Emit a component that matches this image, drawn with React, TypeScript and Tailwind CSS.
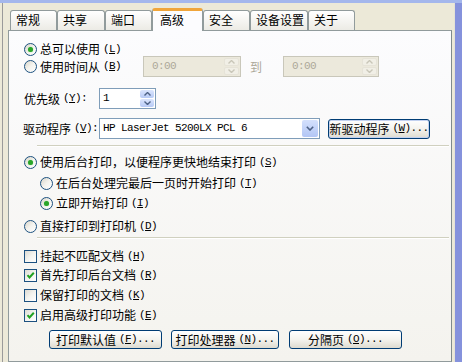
import React from 'react';

const mono = "font-['Liberation_Mono','DejaVu_Sans_Mono',monospace] text-[11px] tracking-[-0.6px]";

function Key({ k, dots }: { k: string; dots?: boolean }) {
  return (
    <span className={`${mono} ml-[3px]`}>
      (<span className="underline underline-offset-[1px]">{k}</span>){dots ? '...' : ''}
    </span>
  );
}

function Radio({ checked }: { checked?: boolean }) {
  return (
    <span className="w-[13px] h-[13px] shrink-0 rounded-full border border-[#1c5180] bg-gradient-to-br from-[#d8d5ca] via-[#f4f3ee] to-white flex items-center justify-center">
      {checked && <span className="w-[5px] h-[5px] rounded-full bg-[#2aa52a] shadow-[0_0_1px_#6fd36f]" />}
    </span>
  );
}

function Check({ checked }: { checked?: boolean }) {
  return (
    <span className="w-[13px] h-[13px] shrink-0 border border-[#1c5180] bg-gradient-to-br from-[#dcdad2] via-[#f3f3ef] to-white flex items-center justify-center">
      {checked && (
        <svg width="11" height="11" viewBox="0 0 11 11">
          <path d="M2.5 5.2 L4.5 7.4 L8.8 2.8" fill="none" stroke="#21a121" strokeWidth="2" />
        </svg>
      )}
    </span>
  );
}

function Arrow({ up, color }: { up?: boolean; color: string }) {
  return (
    <svg width="7" height="4" viewBox="0 0 7 4">
      <path d={up ? 'M0.5 3.5 L3.5 0.5 L6.5 3.5' : 'M0.5 0.5 L3.5 3.5 L6.5 0.5'} fill="none" stroke={color} strokeWidth="1.4" />
    </svg>
  );
}

function TimeBox({ w }: { w: string }) {
  return (
    <div className={`${w} h-[21px] border border-[#c9c7ba] bg-[#ece9dc] flex items-center justify-between`}>
      <span className={`${mono} text-[#aca899] ml-[8px]`}>0:00</span>
      <div className="w-[17px] h-full flex flex-col gap-[1px] p-[1px]">
        <div className="flex-1 rounded-[2px] bg-[#f1efe6] border border-[#e6e3d8] flex items-center justify-center">
          <Arrow up color="#c9c6b8" />
        </div>
        <div className="flex-1 rounded-[2px] bg-[#f1efe6] border border-[#e6e3d8] flex items-center justify-center">
          <Arrow color="#c9c6b8" />
        </div>
      </div>
    </div>
  );
}

function Btn({ w, children }: { w: string; children: React.ReactNode }) {
  return (
    <div className={`${w} h-[19px] rounded-[3px] border border-[#003c74] bg-gradient-to-b from-white via-[#f4f3ee] to-[#dedbd0] flex items-center justify-center text-black`}>
      {children}
    </div>
  );
}

const tabs = [
  { t: '常规', w: 'w-[47px]' },
  { t: '共享', w: 'w-[48px]' },
  { t: '端口', w: 'w-[47px]' },
  { t: '高级', w: 'w-[51px]', sel: true },
  { t: '安全', w: 'w-[47px]' },
  { t: '设备设置', w: 'w-[58px]' },
  { t: '关于', w: 'w-[47px]' },
];

function Sep() {
  return <div className="ml-[13px] w-[412px] h-[2px] border-t border-[#d0d0bf] border-b border-b-white" />;
}

export default function App() {
  return (
    <div className="w-[462px] h-[362px] overflow-hidden bg-[#ece9d8] flex flex-col font-['Noto_Sans_CJK_SC',sans-serif] text-[12px] leading-none text-black">
      <div className="h-[3px] shrink-0 bg-[#a4b7ec]" />
      <div className="flex flex-1 min-h-0">
        <div className="w-[452px] ml-[2px] border-l border-[#9a9a9a] pl-[5px] flex flex-col">
          <div className="h-[22px] mt-[5px] pl-[2px] flex items-end">
            {tabs.map((tab) =>
              tab.sel ? (
                <div
                  key={tab.t}
                  className={`${tab.w} h-[23px] -mb-[1px] relative z-10 rounded-t-[3px] border-x border-[#919b9c] border-t-[3px] border-t-[#f0a53a] bg-[#fcfcfe] pl-[7px] pt-[3px]`}
                >
                  {tab.t}
                </div>
              ) : (
                <div
                  key={tab.t}
                  className={`${tab.w} h-[20px] rounded-t-[3px] border-x border-t border-[#919b9c] bg-gradient-to-b from-white to-[#ecebe5] pl-[5px] pt-[3px]`}
                >
                  {tab.t}
                </div>
              )
            )}
          </div>
          <div className="w-[444px] flex-1 border border-[#919b9c] border-r-[#7f8a8b] bg-gradient-to-b from-[#fcfcfe] to-[#f4f3ee] pl-[15px] flex flex-col">
            <div className="h-[16px] mt-[10px] flex items-center">
              <Radio checked />
              <span className="ml-[3px]">总可以使用</span>
              <Key k="L" />
            </div>
            <div className="h-[21px] -mt-[1px] flex items-center">
              <div className="w-[119px] flex items-center">
                <Radio />
                <span className="ml-[3px]">使用时间从</span>
                <Key k="B" />
              </div>
              <TimeBox w="w-[98px]" />
              <span className="ml-[9px] text-[#aca899]">到</span>
              <div className="ml-[21px]">
                <TimeBox w="w-[96px]" />
              </div>
            </div>
            <div className="h-[21px] mt-[11px] flex items-center">
              <div className="w-[77px] -ml-[2px] pl-[2px] flex items-center">
                <span>优先级</span>
                <Key k="Y" />
                <span className={mono}>:</span>
              </div>
              <div className="w-[57px] h-[21px] border border-[#7f9db9] bg-white flex items-center justify-between">
                <span className={`${mono} ml-[3px]`}>1</span>
                <div className="w-[16px] h-full flex flex-col gap-[1px] p-[1px]">
                  <div className="flex-1 rounded-[2px] bg-gradient-to-b from-[#dbe5fd] to-[#b7caf6] flex items-center justify-center">
                    <Arrow up color="#4d6185" />
                  </div>
                  <div className="flex-1 rounded-[2px] bg-gradient-to-b from-[#dbe5fd] to-[#b7caf6] flex items-center justify-center">
                    <Arrow color="#4d6185" />
                  </div>
                </div>
              </div>
            </div>
            <div className="h-[21px] mt-[9px] flex items-center">
              <div className="w-[77px] -ml-[2px] pl-[1px] flex items-center">
                <span>驱动程序</span>
                <Key k="V" />
                <span className={mono}>:</span>
              </div>
              <div className="w-[221px] h-[21px] border border-[#7f9db9] bg-white flex items-center justify-between">
                <span className={`${mono} ml-[3px]`}>HP LaserJet 5200LX PCL 6</span>
                <div className="w-[18px] h-full p-[1px]">
                  <div className="h-full rounded-[2px] bg-gradient-to-b from-[#d4e0fc] to-[#b2c6f5] flex items-center justify-center">
                    <svg width="8" height="5" viewBox="0 0 8 5">
                      <path d="M0.8 0.8 L4 4 L7.2 0.8" fill="none" stroke="#4d6185" strokeWidth="1.6" />
                    </svg>
                  </div>
                </div>
              </div>
              <div className="ml-[8px]">
                <div className="w-[102px] h-[20px] rounded-[3px] border border-[#003c74] shadow-[inset_0_0_0_1px_#c2d1f0] bg-gradient-to-b from-white via-[#f4f3ee] to-[#dedbd0] flex items-center justify-center">
                  <span>新驱动程序</span>
                  <Key k="W" dots />
                </div>
              </div>
            </div>
            <div className="mt-[6px]">
              <Sep />
            </div>
            <div className="h-[16px] mt-[7px] flex items-center">
              <Radio checked />
              <span className="ml-[3px]">使用后台打印，以便程序更快地结束打印</span>
              <Key k="S" />
            </div>
            <div className="h-[16px] mt-[5px] pl-[16px] flex items-center">
              <Radio />
              <span className="ml-[3px]">在后台处理完最后一页时开始打印</span>
              <Key k="T" />
            </div>
            <div className="h-[16px] mt-[4px] pl-[16px] flex items-center">
              <Radio checked />
              <span className="ml-[3px]">立即开始打印</span>
              <Key k="I" />
            </div>
            <div className="h-[16px] mt-[7px] flex items-center">
              <Radio />
              <span className="ml-[3px]">直接打印到打印机</span>
              <Key k="D" />
            </div>
            <div className="mt-[3px]">
              <Sep />
            </div>
            <div className="h-[16px] mt-[9px] flex items-center">
              <Check />
              <span className="ml-[3px]">挂起不匹配文档</span>
              <Key k="H" />
            </div>
            <div className="h-[16px] mt-[3px] flex items-center">
              <Check checked />
              <span className="ml-[3px]">首先打印后台文档</span>
              <Key k="R" />
            </div>
            <div className="h-[16px] mt-[4px] flex items-center">
              <Check />
              <span className="ml-[3px]">保留打印的文档</span>
              <Key k="K" />
            </div>
            <div className="h-[16px] mt-[4px] flex items-center">
              <Check checked />
              <span className="ml-[3px]">启用高级打印功能</span>
              <Key k="E" />
            </div>
            <div className="mt-[7px] pl-[25px] flex gap-[9px]">
              <Btn w="w-[113px]">
                <span>打印默认值</span>
                <Key k="F" dots />
              </Btn>
              <Btn w="w-[108px]">
                <span>打印处理器</span>
                <Key k="N" dots />
              </Btn>
              <div className="ml-[1px]">
                <Btn w="w-[113px]">
                  <span>分隔页</span>
                  <Key k="O" dots />
                </Btn>
              </div>
            </div>
          </div>
        </div>
        <div className="w-[8px] ml-[1px] border-l border-[#e4e2d6] bg-[#8592dc]" />
      </div>
    </div>
  );
}
